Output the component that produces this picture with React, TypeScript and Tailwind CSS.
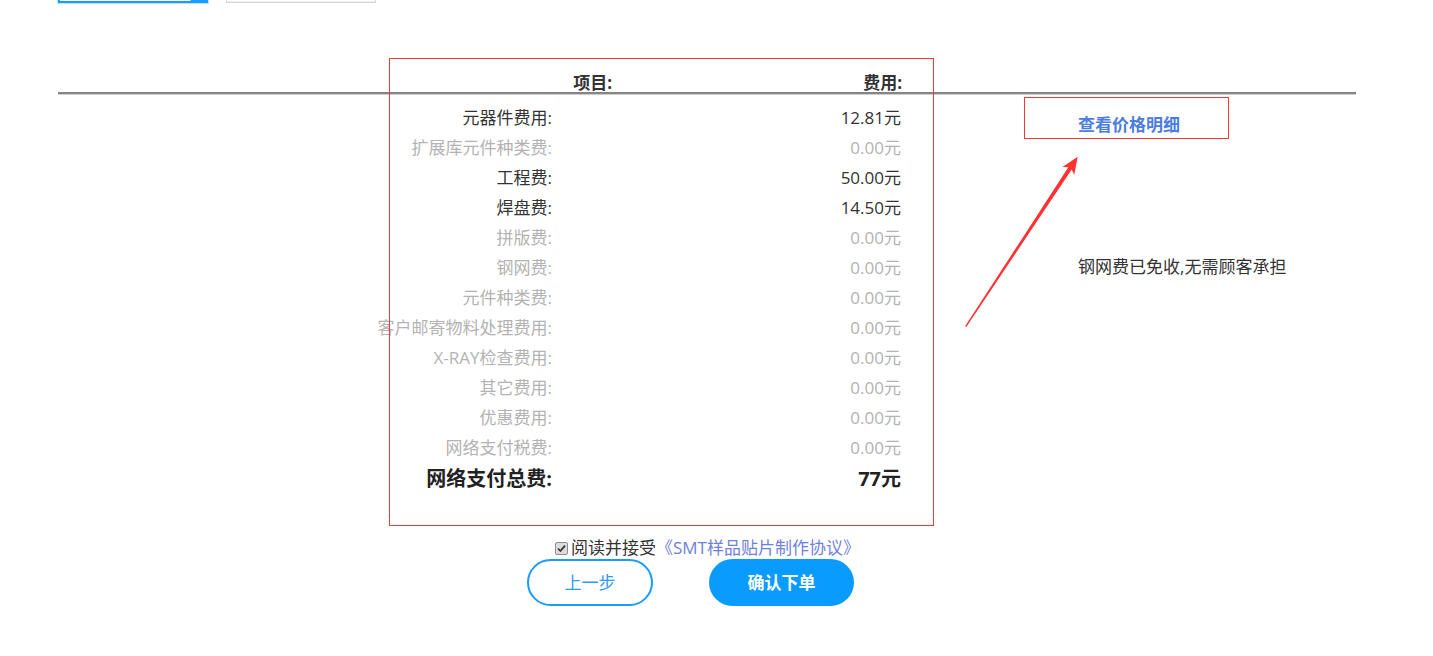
import React from "react";

type Row = { label: string; value: string; dark: boolean };

const rows: Row[] = [
  { label: "元器件费用:", value: "12.81元", dark: true },
  { label: "扩展库元件种类费:", value: "0.00元", dark: false },
  { label: "工程费:", value: "50.00元", dark: true },
  { label: "焊盘费:", value: "14.50元", dark: true },
  { label: "拼版费:", value: "0.00元", dark: false },
  { label: "钢网费:", value: "0.00元", dark: false },
  { label: "元件种类费:", value: "0.00元", dark: false },
  { label: "客户邮寄物料处理费用:", value: "0.00元", dark: false },
  { label: "X-RAY检查费用:", value: "0.00元", dark: false },
  { label: "其它费用:", value: "0.00元", dark: false },
  { label: "优惠费用:", value: "0.00元", dark: false },
  { label: "网络支付税费:", value: "0.00元", dark: false },
];

export default function App() {
  return (
    <div className="relative w-[1433px] h-[656px] overflow-hidden bg-white font-['Open_Sans','Noto_Sans_CJK_SC',sans-serif] text-[#333]">
      {/* top option tabs (cut off) */}
      <div className="flex gap-[18px] pl-[58px] -mt-[37px]">
        <div className="relative w-[150px] h-[40px] border-2 border-[#1a9bff] outline outline-1 outline-[#bfe2ff]">
          <div className="absolute right-0 bottom-0 w-0 h-0 border-l-[16px] border-l-transparent border-b-[16px] border-b-[#1a9bff]" />
        </div>
        <div className="w-[150px] h-[40px] border border-[#d6d6d6] bg-white shadow-[inset_0_-1px_0_#eeeeee]" />
      </div>

      {/* header row */}
      <div className="ml-[58px] mr-[77px] mt-[59px]">
        <div className="flex h-[30px] items-center text-[17px] font-bold leading-[20px] pt-[12px]">
          <div className="w-[554px] text-right">项目:</div>
          <div className="w-[290px] text-right">费用:</div>
        </div>
        <div className="h-[2px] bg-[#858585]" />
        <div className="h-px bg-[#cfcfcf]" />
      </div>

      {/* body */}
      <div className="flex pl-[58px]">
        <div className="flex flex-col pt-[8px]">
          {rows.map((r) => (
            <div
              key={r.label}
              className={`flex h-[30px] items-center text-[17px] leading-[20px] ${r.dark ? "text-[#333]" : "text-[#b3b3b3]"}`}
            >
              <div className="w-[494px] text-right whitespace-nowrap">{r.label}</div>
              <div className="w-[349px] text-right">{r.value}</div>
            </div>
          ))}
          <div className="flex h-[32px] items-center text-[20px] font-bold leading-[24px] text-[#222]">
            <div className="w-[494px] text-right">网络支付总费:</div>
            <div className="w-[349px] text-right">77元</div>
          </div>
        </div>
        <div className="ml-[177px] flex flex-col">
          <a className="mt-[18px] h-[24px] leading-[24px] text-[17px] font-bold text-[#4a7ddf]">查看价格明细</a>
          <div className="mt-[118px] h-[24px] leading-[24px] text-[17px] text-[#333] whitespace-nowrap">
            钢网费已免收,无需顾客承担
          </div>
        </div>
      </div>

      {/* agreement */}
      <div className="flex items-center h-[22px] mt-[42px] pl-[555px] text-[17px] leading-[22px]">
        <span className="flex items-center justify-center w-[13px] h-[13px] rounded-[2px] border border-[#8f8f8f] bg-[#dcdcdc]">
          <svg width="11" height="11" viewBox="0 0 11 11">
            <path d="M2 5.5 L4.4 8 L9 2.6" fill="none" stroke="#333" strokeWidth="1.8" />
          </svg>
        </span>
        <span className="ml-[3px] text-[#333]">阅读并接受</span>
        <span className="text-[#6f7fe0]">《SMT样品贴片制作协议》</span>
      </div>

      {/* buttons */}
      <div className="flex pl-[527px]">
        <button className="w-[126px] h-[47px] rounded-full border-2 border-[#1a9bff] bg-white text-[17px] text-[#2f98ff]">
          上一步
        </button>
        <button className="ml-[56px] w-[145px] h-[47px] rounded-full bg-[#0a9bff] text-[17px] font-bold text-white">
          确认下单
        </button>
      </div>

      {/* annotations */}
      <div className="absolute left-[389px] top-[58px] w-[545px] h-[468px] border border-[#f23a3a] pointer-events-none" />
      <div className="absolute left-[1024px] top-[97px] w-[205px] h-[42px] border border-[#f23a3a] pointer-events-none" />
      <svg className="absolute left-0 top-0 pointer-events-none" width="1433" height="656">
        <polygon
          points="1077.7,156.7 1074.2,174.7 1071.7,169.5 966.3,327.1 965.1,326.3 1068.3,167.3 1062.5,167.0"
          fill="#ff3232"
        />
      </svg>
    </div>
  );
}
